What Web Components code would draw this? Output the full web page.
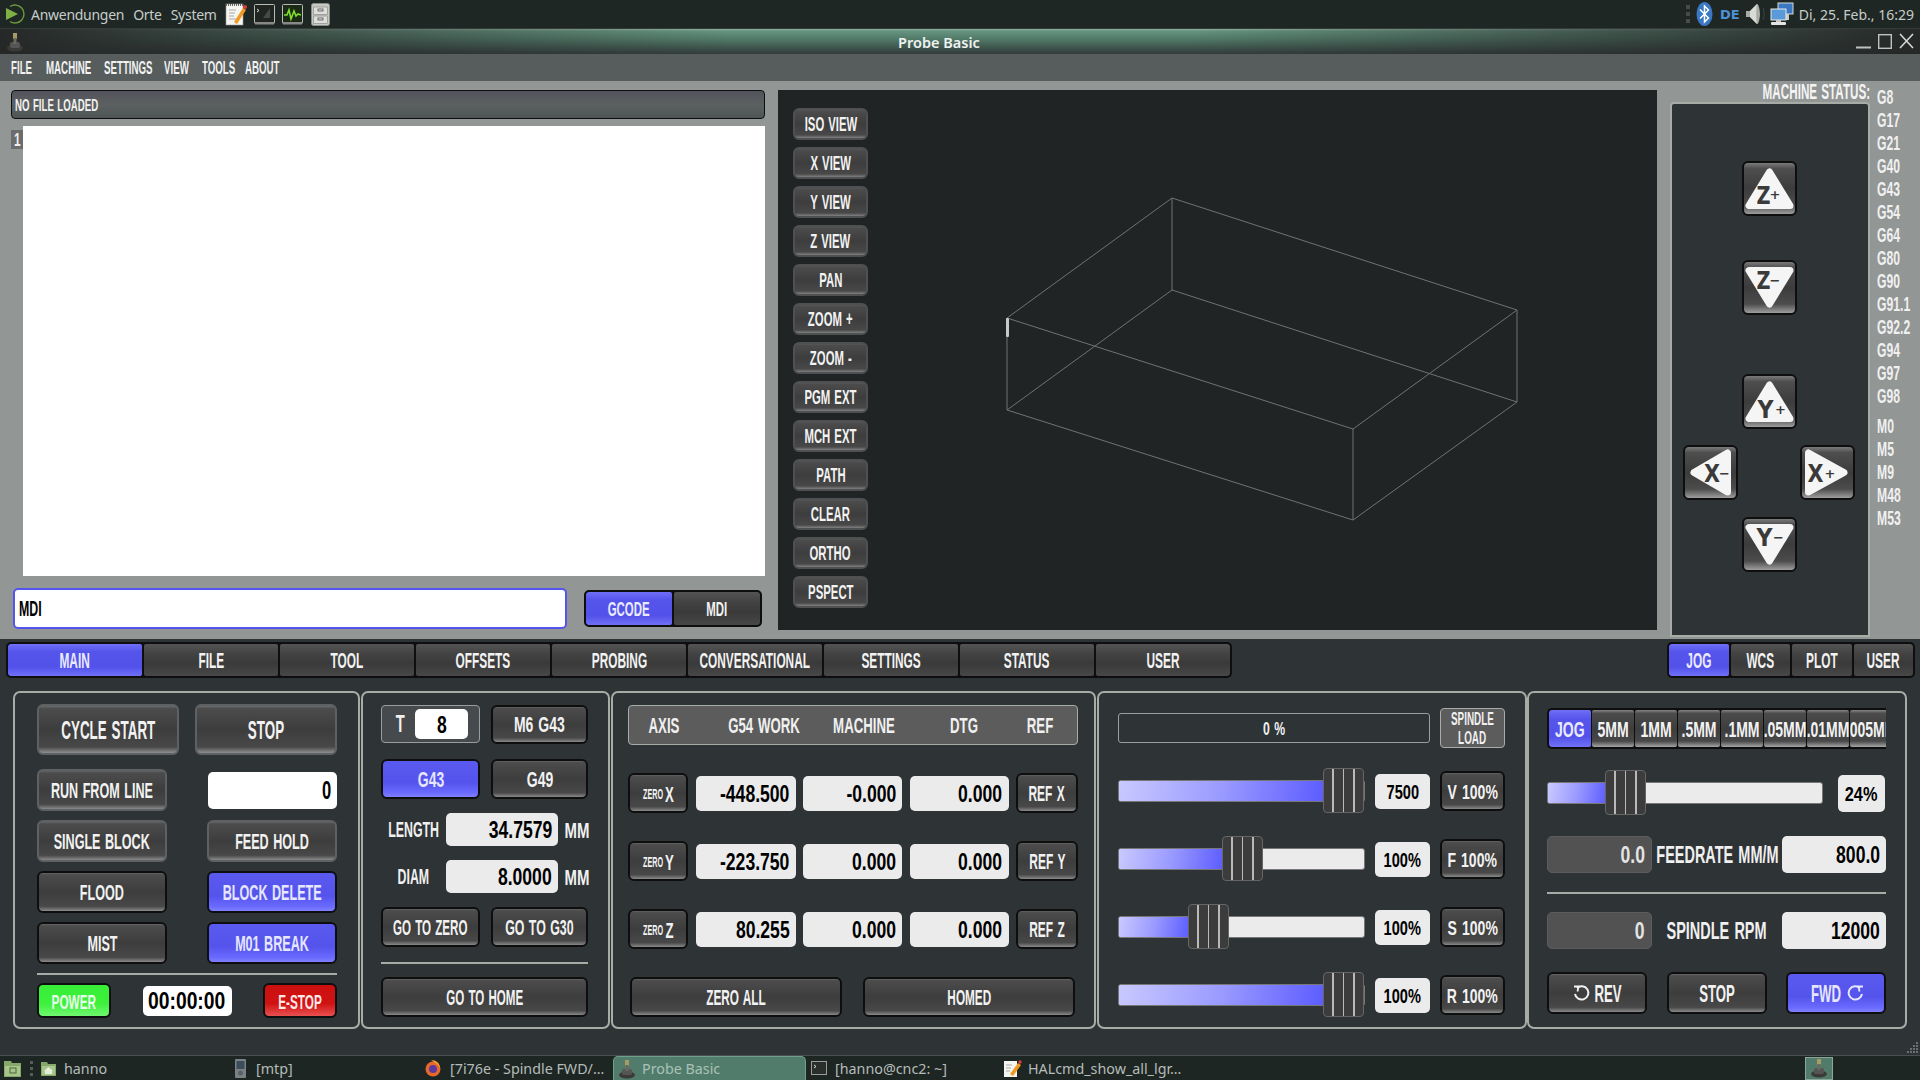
<!DOCTYPE html>
<html lang="de">
<head>
<meta charset="utf-8">
<title>Probe Basic</title>
<style>
  html, body { margin: 0; width: 1920px; height: 1080px; overflow: hidden; background: #2e3336; }
  body { display: flex; flex-direction: column; font-family: "Liberation Sans", Arial, sans-serif; }
</style>
</head>
<body>
<desk-panel></desk-panel>
<title-bar></title-bar>
<menu-bar></menu-bar>
<work-area></work-area>
<lower-area></lower-area>
<task-panel></task-panel>

<script>
// narrow caps: the machine UI font is a tall condensed face, so squeeze a bold sans
const NARROW = `
  .n { display: inline-flex; justify-content: center; white-space: nowrap; width: var(--w, auto); position: relative; top: 1px;
       word-spacing: .08em; transform: scaleX(calc(var(--sx, .63) * .9)); transform-origin: var(--ox, center);
       font: bold calc(var(--fs, 20px) * 1.11)/1 "Liberation Sans", Arial, sans-serif; }
`;
const PANEL = `
  :host { display: block; box-sizing: border-box; height: 338px; flex: none;
          border: 2px solid #a8aca6; border-radius: 7px; }
`;
const GLOSS = 'linear-gradient(180deg,#858585 0,#4c4c4c 9%,#3d3d3d 50%,#484848 84%,#a6a6a6 100%)';
const GLOSS_ON = 'linear-gradient(180deg,#5a5af0 0,#5454ec 60%,#6a6aff 88%,#8080ff 100%)';

class ShadowEl extends HTMLElement {
    constructor() {
        super();
        this.attachShadow({ mode: 'open' });
    }
    connectedCallback() {
        this.render();
    }
}

class CncBtn extends ShadowEl {
    render() {
        this.shadowRoot.innerHTML = `
            <style>
                ${NARROW}
                :host { display: flex; box-sizing: border-box; align-items: center; justify-content: center; gap: 4px;
                        border: 2px solid #0e0e0e; border-radius: 6px; color: #f2f2f2; overflow: hidden;
                        background: ${GLOSS}; background-origin: border-box; }
                :host([soft]) { border-color: #5d6163; }
                :host([on]) { background: ${GLOSS_ON}; color: #e6e6ff; }
            </style>
            <slot name="lead"></slot><span class="n"><slot></slot></span><slot name="trail"></slot>
        `;
    }
}

class ZeroBtn extends ShadowEl {
    render() {
        this.shadowRoot.innerHTML = `
            <style>
                ${NARROW}
                :host { display: block; }
                cnc-btn { height: 100%; --sx: 1.11; --fs: 18px; }
                .row { display: flex; align-items: center; gap: 2px; }
                .small { --fs: 12.5px; --sx: .58; --w: 20px; }
                .big { --fs: 20px; --sx: .66; --w: 9px; }
            </style>
            <cnc-btn><span class="row"><span class="n small">ZERO</span><span class="n big">${this.getAttribute('axis')}</span></span></cnc-btn>
        `;
    }
}

class CncField extends ShadowEl {
    render() {
        this.shadowRoot.innerHTML = `
            <style>
                ${NARROW}
                :host { display: flex; box-sizing: border-box; align-items: center; justify-content: flex-end;
                        padding-right: 6px; background: #ebebeb; color: #000; border-radius: 5px;
                        --fs: 22px; --sx: .8; --ox: right; }
                :host([center]) { justify-content: center; padding: 0; --ox: center; --fs: 18.5px; --sx: .79; }
                :host([white]) { background: #fff; }
                :host([dark]) { background: #525252; color: #e4e4e4; border: 1px solid #5d5d5d; }
            </style>
            <span class="n"><slot></slot></span>
        `;
    }
}

class CncLabel extends ShadowEl {
    render() {
        this.shadowRoot.innerHTML = `
            <style>
                ${NARROW}
                :host { display: flex; align-items: center; justify-content: center; color: #f0f0f0; }
                :host([left]) { justify-content: flex-start; --ox: left; }
                :host([right]) { justify-content: flex-end; --ox: right; }
            </style>
            <span class="n"><slot></slot></span>
        `;
    }
}

class CncTabs extends ShadowEl {
    render() {
        const items = this.getAttribute('items').split(',');
        const active = Number(this.getAttribute('active') || 0);
        const tabs = items.map((t, i) => `<div class="tab${i === active ? ' on' : ''}"><span class="n">${t}</span></div>`).join('');
        this.shadowRoot.innerHTML = `
            <style>
                ${NARROW}
                :host { display: flex; box-sizing: border-box; gap: var(--tg, 2px); background: #0e0e0e; border: 2px solid #0e0e0e;
                        border-radius: 5px; overflow: hidden; color: #f2f2f2; --fs: 19.5px; --sx: .61; }
                .tab { flex: none; width: var(--tw, 134px); display: flex; align-items: center; justify-content: center;
                       border-radius: 2px; overflow: hidden;
                       background: var(--tab-bg, linear-gradient(180deg,#545454 0,#434343 30%,#3a3a3a 60%,#474747 100%)); }
                .tab.on { background: linear-gradient(180deg,#6f6ff6 0,#5555ec 24%,#5252ea 72%,#7070f8 100%); color: #eaeaff; }
            </style>
            ${tabs}
        `;
    }
}

class CncSlider extends ShadowEl {
    render() {
        const pos = this.getAttribute('pos');
        this.shadowRoot.innerHTML = `
            <style>
                :host { display: block; position: relative; height: 22px; box-sizing: border-box; }
                .track { position: absolute; inset: 0; background: #ebebeb; border: 1px solid #777; border-radius: 3px; overflow: hidden; }
                .fill { height: 100%; width: ${pos}px; background: linear-gradient(100deg,#c9c9ff 0,#9a9aff 50%,#5c5cff 100%); }
                .handle { position: absolute; top: -12px; left: ${pos}px; width: 41px; height: 45px; box-sizing: border-box;
                          border: 1px solid #666; border-radius: 4px;
                          background: repeating-linear-gradient(90deg,#3c3c3c 0 8.4px,#b9b9b9 8.4px 10.2px); }
            </style>
            <div class="track"><div class="fill"></div></div>
            <div class="handle"></div>
        `;
    }
}

class JogBtn extends ShadowEl {
    render() {
        const axis = this.getAttribute('axis');
        const key = axis + this.getAttribute('sign');
        const spec = {
            'Z+': { tri: '27.5,11 7,44.5 48,44.5', lx: 21.5, ly: 43, sx: 33, sy: 38 },
            'Z-': { tri: '7,10.5 48,10.5 27.5,44', lx: 21.5, ly: 29, sx: 33, sy: 25 },
            'Y+': { tri: '27.5,11 7,44.5 48,44.5', lx: 23.5, ly: 44, sx: 38.5, sy: 40 },
            'Y-': { tri: '7,10.5 48,10.5 27.5,44', lx: 22.5, ly: 29, sx: 36.5, sy: 25 },
            'X-': { tri: '11,27.5 44.5,8 44.5,47', lx: 29, ly: 36.5, sx: 41.5, sy: 33 },
            'X+': { tri: '8.5,8 8.5,47 44,27.5',   lx: 15.5, ly: 36.5, sx: 30, sy: 33 }
        }[key];
        const sign = this.getAttribute('sign') === '+' ? '+' : '−';
        const wide = axis === 'Z' ? 14 : 16;
        this.shadowRoot.innerHTML = `
            <style>
                :host { display: block; width: 55px; height: 55px; box-sizing: border-box; border: 2px solid #0e0e0e;
                        border-radius: 6px; background: linear-gradient(180deg,#8a8a8a 0,#4e4e4e 14%,#3c3c3c 50%,#4c4c4c 80%,#b0b0b0 100%); background-origin: border-box; }
                svg { display: block; }
                text { font-family: "DejaVu Sans", sans-serif; font-weight: bold; fill: #3a3a3a; text-anchor: middle; }
            </style>
            <svg width="51" height="51" viewBox="2 2 51 51">
                <polygon points="${spec.tri}" fill="#f5f5f5" stroke="#f5f5f5" stroke-width="7" stroke-linejoin="round"/>
                <text x="${spec.lx}" y="${spec.ly}" font-size="24" textLength="${wide}" lengthAdjust="spacingAndGlyphs">${axis}</text>
                <text x="${spec.sx}" y="${spec.sy}" font-size="13">${sign}</text>
            </svg>
        `;
    }
}

class JoyIcon extends ShadowEl {
    render() {
        this.shadowRoot.innerHTML = `
            <style>:host { display: inline-block; width: 18px; height: 20px; flex: none; } svg { display: block; }</style>
            <svg width="18" height="20" viewBox="0 0 18 20">
                <ellipse cx="9" cy="16" rx="8" ry="3.5" fill="#3c3a36"/>
                <rect x="4" y="10" width="10" height="6" rx="2" fill="#555"/>
                <rect x="7" y="1" width="4" height="6" fill="#a89a64"/>
                <rect x="7.5" y="6" width="3" height="6" fill="#6a6a5c"/>
            </svg>
        `;
    }
}

class DeskPanel extends ShadowEl {
    render() {
        this.shadowRoot.innerHTML = `
            <style>
                :host { display: flex; align-items: center; flex: none; box-sizing: border-box; height: 29px; background: #1f2725;
                        border-bottom: 1px solid #343c3a; padding-left: 5px; color: #c6cdc9; font: 14px "Noto Sans", sans-serif; }
                svg { display: block; flex: none; }
                .menu { margin-left: 6px; display: flex; gap: 9px; letter-spacing: -.28px; }
                .tray { margin-left: auto; display: flex; align-items: center; padding-right: 6px; }
                .de { color: #4b93d6; font: bold 13px "DejaVu Sans", sans-serif; margin: 0 5px 0 7px; }
            </style>
            <svg width="20" height="22" viewBox="0 0 20 22">
                <path d="M5 3.5 A9 9 0 1 1 5 18.5" fill="none" stroke="#6f9a3c" stroke-width="1.4"/>
                <path d="M1 5 L13 11 L1 17 Z" fill="#7fb046"/>
            </svg>
            <div class="menu"><span>Anwendungen</span><span>Orte</span><span>System</span></div>
            <svg style="margin-left:8px" width="22" height="25" viewBox="0 0 22 25">
                <rect x="1" y="2" width="17" height="21" fill="#f4f4f0" stroke="#999" stroke-width=".6"/>
                <path d="M1 3h17" stroke="#666" stroke-width="2" stroke-dasharray="1 1"/>
                <path d="M4 8h7M4 11h6M4 14h5M4 17h7" stroke="#aaa"/>
                <path d="M9 20 L18 6 L21 8 L12 22 Z" fill="#f09a22"/>
                <circle cx="20" cy="5" r="2" fill="#d8403c"/>
            </svg>
            <svg style="margin-left:7px" width="21" height="21" viewBox="0 0 21 21">
                <rect x=".5" y=".5" width="20" height="19" rx="1" fill="#202522" stroke="#b8bcb6"/>
                <rect x="1" y="18" width="19" height="2.5" fill="#888"/>
                <path d="M3 5l2 1.5L3 8" stroke="#ddd" fill="none"/>
                <path d="M9 14 L16 4 V14 Z" fill="#454a46"/>
            </svg>
            <svg style="margin-left:7px" width="21" height="21" viewBox="0 0 21 21">
                <rect x=".5" y=".5" width="20" height="19" rx="1" fill="#1a2a14" stroke="#b8bcb6"/>
                <rect x="1" y="18" width="19" height="2.5" fill="#888"/>
                <path d="M2 11h3l2-5 2 9 3-8 2 5 2-2 3 1" fill="none" stroke="#7fe02c" stroke-width="1.6"/>
            </svg>
            <svg style="margin-left:8px" width="19" height="23" viewBox="0 0 19 23">
                <rect x=".5" y=".5" width="18" height="22" rx="2" fill="#c6c8c2" stroke="#8a8c88"/>
                <rect x="2.5" y="4" width="14" height="7.5" fill="#dcdeda" stroke="#8a8c88" stroke-width=".7"/>
                <rect x="2.5" y="13" width="14" height="7.5" fill="#dcdeda" stroke="#8a8c88" stroke-width=".7"/>
                <rect x="7" y="6" width="5" height="2" fill="none" stroke="#555" stroke-width=".8"/>
                <rect x="7" y="15" width="5" height="2" fill="none" stroke="#555" stroke-width=".8"/>
            </svg>
            <div class="tray">
                <svg width="5" height="18" viewBox="0 0 5 18"><path d="M0 0h4v4H0zM0 7h4v4H0zM0 14h4v4H0z" fill="#454c4a"/></svg>
                <svg style="margin-left:5px" width="17" height="24" viewBox="0 0 17 24">
                    <ellipse cx="8.5" cy="12" rx="8" ry="12" fill="#3a78c4"/>
                    <path d="M4 7.5 L12.5 16 L8.5 20 V4 L12.5 8 L4 16.5" fill="none" stroke="#fff" stroke-width="1.5"/>
                </svg>
                <span class="de">DE</span>
                <svg width="21" height="24" viewBox="0 0 21 24">
                    <path d="M1 9h4l7-7c1.5-1 3 6 3 10s-1.5 11-3 10l-7-7H1z" fill="#a8aca6"/>
                    <path d="M5 9l7-7c-1 4-1 16 0 20l-7-7z" fill="#d8dad6"/>
                    <path d="M18 6c1.5 4 1.5 8 0 12" stroke="#3a4442" fill="none"/>
                </svg>
                <svg style="margin-left:4px" width="24" height="24" viewBox="0 0 24 24">
                    <rect x="8" y="1" width="15" height="11" fill="#3a78c4" stroke="#d8dad6"/>
                    <rect x="15" y="12" width="4" height="6" fill="#c8cac6"/>
                    <rect x="1" y="7" width="15" height="11" fill="#5a9ad8" stroke="#e8e8e8"/>
                    <rect x="6" y="18" width="5" height="2" fill="#c8cac6"/>
                    <rect x="1" y="20" width="15" height="3" rx="1" fill="#e4e4e4"/>
                </svg>
                <span style="margin-left:5px">Di, 25. Feb., 16:29</span>
            </div>
        `;
    }
}

class TitleBar extends ShadowEl {
    render() {
        this.shadowRoot.innerHTML = `
            <style>
                :host { display: flex; align-items: center; justify-content: center; position: relative; flex: none; height: 25px; box-sizing: border-box; padding-right: 42px;
                        background: linear-gradient(90deg,#262828 0,rgba(38,40,40,0) 38%,rgba(38,40,40,0) 62%,#262828 100%),
                                    linear-gradient(180deg,#8fb5a4 0,#66937f 8%,#547f6d 35%,#3c4f49 80%,#333b3b 100%);
                        color: #eef2f0; font: 600 14.5px "Noto Sans", sans-serif; }
                joy-icon { position: absolute; left: 6px; top: 3px; }
                .ctl { position: absolute; right: 6px; top: 4px; display: flex; align-items: flex-end; gap: 7px; }
                svg { display: block; }
            </style>
            <joy-icon></joy-icon>
            <span>Probe Basic</span>
            <div class="ctl">
                <svg width="15" height="16" viewBox="0 0 15 16"><rect y="13.5" width="15" height="2" fill="#bdc2bf"/></svg>
                <svg width="14" height="16" viewBox="0 0 14 16"><rect x=".7" y="1.7" width="12.6" height="13.6" fill="none" stroke="#bdc2bf" stroke-width="1.4"/></svg>
                <svg width="15" height="16" viewBox="0 0 15 16"><path d="M1 1L14 15M14 1L1 15" stroke="#d4d8d5" stroke-width="1.6"/></svg>
            </div>
        `;
    }
}

class MenuBar extends ShadowEl {
    render() {
        const items = ['FILE', 'MACHINE', 'SETTINGS', 'VIEW', 'TOOLS', 'ABOUT'];
        this.shadowRoot.innerHTML = `
            <style>
                ${NARROW}
                :host { display: grid; flex: none; height: 27px; box-sizing: border-box; padding-left: 11px; align-items: center;
                        grid-template-columns: 34.5px 58.5px 60px 38px 43px auto; justify-content: start;
                        background: #575d5d; color: #f2f2f2; --fs: 16.5px; --sx: .59; --ox: left; }
                .n { justify-self: start; }
            </style>
            ${items.map(t => `<span class="n">${t}</span>`).join('')}
        `;
    }
}

class GcodePane extends ShadowEl {
    render() {
        this.shadowRoot.innerHTML = `
            <style>
                ${NARROW}
                :host { display: flex; flex-direction: column; flex: none; width: 754px; box-sizing: border-box; padding-top: 9px; margin-left: 11px; }
                .file { height: 29px; box-sizing: border-box; border: 1px solid #0e0e0e; border-radius: 4px; display: flex; align-items: center;
                        padding-left: 3px; color: #f2f2f2; --fs: 15.5px; --sx: .625; --ox: left;
                        background: linear-gradient(180deg,#53535c 0,#5c6060 50%,#4f5555 100%); }
                .editor { display: flex; height: 450px; margin-top: 7px; }
                .gutter { width: 12px; flex: none; }
                .gutter b { display: flex; align-items: center; justify-content: center; height: 19px; margin-top: 4px; background: #6c6c6c;
                            color: #eee; --fs: 17px; --sx: .7; }
                .text { flex: 1; background: #fff; }
                .cmd { display: flex; align-items: center; margin-top: 12px; height: 41px; }
                .mdi { width: 554px; height: 41px; box-sizing: border-box; margin-left: 2px; border: 2px solid #5555ee; border-radius: 5px; background: #fff;
                       display: flex; align-items: center; padding-left: 4px; color: #000; --fs: 20px; --sx: .62; --ox: left; }
                cnc-tabs { margin-left: 17px; height: 37px; --tw: 86px; --fs: 18.5px; --sx: .62; }
            </style>
            <div class="file"><span class="n">NO FILE LOADED</span></div>
            <div class="editor">
                <div class="gutter"><b><span class="n">1</span></b></div>
                <div class="text"></div>
            </div>
            <div class="cmd">
                <div class="mdi"><span class="n">MDI</span></div>
                <cnc-tabs items="GCODE,MDI" active="0"></cnc-tabs>
            </div>
        `;
    }
}

class ViewPane extends ShadowEl {
    render() {
        const names = ['ISO VIEW', 'X VIEW', 'Y VIEW', 'Z VIEW', 'PAN', 'ZOOM +', 'ZOOM -', 'PGM EXT', 'MCH EXT', 'PATH', 'CLEAR', 'ORTHO', 'PSPECT'];
        this.shadowRoot.innerHTML = `
            <style>
                :host { display: block; position: relative; flex: none; width: 879px; height: 540px; margin: 9px 0 0 13px; background: #202425; }
                .btns { display: flex; flex-direction: column; gap: 7px; padding: 18px 0 0 15px; width: 75px; position: relative; }
                cnc-btn { height: 32px; border-color: #4e5052; --fs: 17.5px; --sx: .65; }
                svg { position: absolute; left: 0; top: 0; }
                .cone { position: absolute; left: 228px; top: 228px; width: 3px; height: 19px; background: #c8c8c8; border-radius: 1px; }
            </style>
            <svg width="879" height="540" viewBox="778 90 879 540" fill="none" stroke="#6f7373" stroke-width="1">
                <path d="M1007 318 L1172 198 L1517 310 L1353 429 Z"/>
                <path d="M1007 410 L1172 290 L1517 402 L1353 520 Z"/>
                <path d="M1007 318 V410 M1172 198 V290 M1517 310 V402 M1353 429 V520"/>
            </svg>
            <div class="cone"></div>
            <div class="btns">${names.map(n => `<cnc-btn>${n}</cnc-btn>`).join('')}</div>
        `;
    }
}

class JogPane extends ShadowEl {
    render() {
        this.shadowRoot.innerHTML = `
            <style>
                ${NARROW}
                :host { display: flex; flex-direction: column; flex: none; width: 200px; margin-left: 13px; }
                .title { height: 21px; box-sizing: border-box; padding-bottom: 2px; display: flex; justify-content: flex-end; align-items: center; color: #f4f4f4; --fs: 19.5px; --sx: .6; --ox: right; }
                .pad { box-sizing: border-box; height: 535px; border: 2px solid #a8aca6; border-radius: 4px 4px 0 0; background: #2e3336;
                       display: grid; grid-template-columns: 55px 55px 55px; justify-content: center; column-gap: 4px; padding: 57px 2px 0 1px; align-content: start; }
                jog-btn { grid-column: 2; }
                .z2 { margin-top: 44px; }
                .y1 { margin-top: 59px; }
                .x1 { grid-column: 1; margin-top: 16px; }
                .x2 { grid-column: 3; margin: 16px 0 0 -1px; }
                .y2 { margin-top: 17px; }
            </style>
            <div class="title"><span class="n">MACHINE STATUS:</span></div>
            <div class="pad">
                <jog-btn axis="Z" sign="+"></jog-btn>
                <jog-btn axis="Z" sign="-" class="z2"></jog-btn>
                <jog-btn axis="Y" sign="+" class="y1"></jog-btn>
                <jog-btn axis="X" sign="-" class="x1"></jog-btn>
                <jog-btn axis="X" sign="+" class="x2"></jog-btn>
                <jog-btn axis="Y" sign="-" class="y2"></jog-btn>
            </div>
        `;
    }
}

class StatusList extends ShadowEl {
    render() {
        const g = ['G8', 'G17', 'G21', 'G40', 'G43', 'G54', 'G64', 'G80', 'G90', 'G91.1', 'G92.2', 'G94', 'G97', 'G98'];
        const m = ['M0', 'M5', 'M9', 'M48', 'M53'];
        const row = t => `<div><span class="n">${t}</span></div>`;
        this.shadowRoot.innerHTML = `
            <style>
                ${NARROW}
                :host { display: block; flex: none; margin-left: 7px; padding-top: 4px; color: #f0f0f0; --fs: 18.5px; --sx: .66; --ox: left; }
                div { height: 23px; display: flex; align-items: center; }
                .gap { height: 7px; }
            </style>
            ${g.map(row).join('')}<div class="gap"></div>${m.map(row).join('')}
        `;
    }
}

class WorkArea extends ShadowEl {
    render() {
        this.shadowRoot.innerHTML = `
            <style>
                :host { display: flex; flex: none; height: 558px; background: #929695; align-items: flex-start; }
            </style>
            <gcode-pane></gcode-pane>
            <view-pane></view-pane>
            <jog-pane></jog-pane>
            <status-list></status-list>
        `;
    }
}

class RunPanel extends ShadowEl {
    render() {
        this.shadowRoot.innerHTML = `
            <style>
                ${PANEL}
                ${NARROW}
                :host { width: 347px; padding: 11px 21px 0 22px; }
                .row { display: flex; justify-content: space-between; align-items: center; height: 42px; margin-top: 9px; }
                .row cnc-btn { width: 130px; height: 42px; }
                .row.top { height: 51px; margin: 0; }
                .row.top cnc-btn { width: 142px; height: 51px; --fs: 24px; --sx: .56; }
                .second { margin-top: 14px; }
                cnc-field { width: 129px; height: 37px; --fs: 23px; --sx: .72; }
                hr { margin: 9px 0 0; border: 0; height: 2px; background: #a8aca6; }
                .row.foot { height: 35px; margin-top: 8px; }
                .row.foot cnc-btn { height: 35px; width: 74px; --fs: 19px; --sx: .62; }
                .power { background: linear-gradient(180deg,#38ee38 0,#3cf03c 60%,#70f870 100%) !important; color: #eaffea; }
                .estop { background: linear-gradient(180deg,#cc1010 0,#d01212 60%,#e85050 100%) !important; color: #ffe8e8; }
                .timer { width: 89px; height: 30px; padding: 0; justify-content: center; --ox: center; --fs: 21px; --sx: .92; }
            </style>
            <div class="row top"><cnc-btn soft>CYCLE START</cnc-btn><cnc-btn soft>STOP</cnc-btn></div>
            <div class="row second"><cnc-btn soft>RUN FROM LINE</cnc-btn><cnc-field white>0</cnc-field></div>
            <div class="row"><cnc-btn soft>SINGLE BLOCK</cnc-btn><cnc-btn soft>FEED HOLD</cnc-btn></div>
            <div class="row"><cnc-btn>FLOOD</cnc-btn><cnc-btn on>BLOCK DELETE</cnc-btn></div>
            <div class="row"><cnc-btn>MIST</cnc-btn><cnc-btn on>M01 BREAK</cnc-btn></div>
            <hr>
            <div class="row foot"><cnc-btn class="power">POWER</cnc-btn><cnc-field white class="timer">00:00:00</cnc-field><cnc-btn class="estop">E-STOP</cnc-btn></div>
        `;
    }
}

class ToolPanel extends ShadowEl {
    render() {
        this.shadowRoot.innerHTML = `
            <style>
                ${PANEL}
                ${NARROW}
                :host { width: 249px; margin-left: 1px; padding: 12px 20px 0 18px; }
                .pair { display: grid; grid-template-columns: 99px 97px; column-gap: 11px; height: 40px; }
                .pair cnc-btn { --sx: .7; }
                .pair.first { height: 39px; }
                .mt15 { margin-top: 15px; }
                .t { box-sizing: border-box; height: 38px; border: 1px solid #9a9e9c; border-radius: 4px; background: #474a4c;
                     display: flex; align-items: center; padding-left: 3px; }
                .t cnc-label { width: 30px; --fs: 21px; --sx: .7; }
                .t cnc-field { width: 53px; height: 30px; padding: 0; justify-content: center; --ox: center; --fs: 22px; --sx: .8; }
                .meas { display: grid; grid-template-columns: 65px 112px 30px; height: 33px; margin-top: 14px; }
                .meas cnc-label { --fs: 20px; --sx: .62; }
                .meas .unit { --sx: .73; --fs: 20.5px; transform: translateX(4px); }
                .pair.go cnc-btn { --sx: .58; }
                .pair.go cnc-btn + cnc-btn { --sx: .62; }
                .mt14 { margin-top: 14px; }
                hr { margin: 15px 0 0; border: 0; height: 2px; background: #a8aca6; }
                .home { height: 40px; margin-top: 13px; --sx: .58; }
            </style>
            <div class="pair first">
                <div class="t"><cnc-label>T</cnc-label><cnc-field white>8</cnc-field></div>
                <cnc-btn>M6 G43</cnc-btn>
            </div>
            <div class="pair mt15"><cnc-btn on>G43</cnc-btn><cnc-btn>G49</cnc-btn></div>
            <div class="meas"><cnc-label>LENGTH</cnc-label><cnc-field>34.7579</cnc-field><cnc-label class="unit">MM</cnc-label></div>
            <div class="meas"><cnc-label>DIAM</cnc-label><cnc-field>8.0000</cnc-field><cnc-label class="unit">MM</cnc-label></div>
            <div class="pair go mt14"><cnc-btn>GO TO ZERO</cnc-btn><cnc-btn>GO TO G30</cnc-btn></div>
            <hr>
            <cnc-btn class="home">GO TO HOME</cnc-btn>
        `;
    }
}

class DroPanel extends ShadowEl {
    render() {
        const row = (a, w, m, d) => `
            <div class="row">
                <zero-btn axis="${a}"></zero-btn>
                <cnc-field>${w}</cnc-field><cnc-field>${m}</cnc-field><cnc-field>${d}</cnc-field>
                <cnc-btn>REF ${a}</cnc-btn>
            </div>`;
        this.shadowRoot.innerHTML = `
            <style>
                ${PANEL}
                ${NARROW}
                :host { width: 485px; margin-left: 1px; padding: 12px 16px 0 15px; display: flex; flex-direction: column; gap: 28px; }
                .head { box-sizing: border-box; height: 40px; display: flex; align-items: center; background: #5c5c5c; border: 1px solid #a8aca6; border-radius: 4px;
                        color: #f0f0f0; --fs: 19.5px; --sx: .68; }
                .head span { width: 70px; }
                .head span + span { margin-left: 30px; }
                .head span:last-child { margin-left: 6px; }
                .row { display: grid; grid-template-columns: 60px 100px 99px 99px 62px; column-gap: 7.5px; height: 40px; align-items: center; }
                .row > * { height: 40px; }
                .row cnc-field { height: 35px; }
                .row cnc-btn { --fs: 20px; --sx: .6; }
                .foot { display: flex; justify-content: space-between; padding: 0 3px 0 2px; }
                .foot cnc-btn { width: 212px; height: 40px; --sx: .59; }
            </style>
            <div class="head"><span class="n">AXIS</span><span class="n">G54 WORK</span><span class="n">MACHINE</span><span class="n">DTG</span><span class="n">REF</span></div>
            ${row('X', '-448.500', '-0.000', '0.000')}
            ${row('Y', '-223.750', '0.000', '0.000')}
            ${row('Z', '80.255', '0.000', '0.000')}
            <div class="foot"><cnc-btn>ZERO ALL</cnc-btn><cnc-btn>HOMED</cnc-btn></div>
        `;
    }
}

class OverridePanel extends ShadowEl {
    render() {
        const row = (pos, val, btn) => `
            <cnc-slider pos="${pos}"></cnc-slider>
            <cnc-field center>${val}</cnc-field>
            <cnc-btn>${btn}</cnc-btn>`;
        this.shadowRoot.innerHTML = `
            <style>
                ${PANEL}
                ${NARROW}
                :host { width: 430px; margin-left: 1px; padding: 15px 0 0 19px; }
                .grid { display: grid; grid-template-columns: 247px 55px 65px; column-gap: 10px; grid-template-rows: 35px 40px 40px 40px 40px;
                        row-gap: 28px; align-items: center; }
                .load { grid-column: 1 / 3; align-self: start; height: 30px; margin-top: 5px; box-sizing: border-box; border: 1px solid #9a9e9c; border-radius: 3px; display: flex;
                        align-items: center; justify-content: center; color: #f0f0f0; --fs: 17px; --sx: .72; }
                .spin { align-self: start; height: 40px; box-sizing: border-box; background: #5c5c5c; border: 1px solid #a8aca6; border-radius: 4px; color: #f0f0f0;
                        display: flex; flex-direction: column; align-items: center; justify-content: center; --fs: 16px; --sx: .62; }
                .spin .n { height: 19px; align-items: center; }
                cnc-field { height: 35px; }
                cnc-btn { height: 40px; --fs: 18.5px; --sx: .76; }
            </style>
            <div class="grid">
                <div class="load"><span class="n">0 %</span></div>
                <div class="spin"><span class="n">SPINDLE</span><span class="n">LOAD</span></div>
                ${row(205, '7500', 'V 100%')}
                ${row(104, '100%', 'F 100%')}
                ${row(70, '100%', 'S 100%')}
                ${row(205, '100%', 'R 100%')}
            </div>
        `;
    }
}

class SpindlePanel extends ShadowEl {
    render() {
        this.shadowRoot.innerHTML = `
            <style>
                ${PANEL}
                ${NARROW}
                :host { width: 380px; padding: 15px 0 0 18px; }
                .inner { width: 339px; }
                cnc-tabs { height: 41px; border-radius: 5px 0 0 5px; border-right: 0; --tw: 42px; --tg: 1px; --fs: 19.5px; --sx: .72;
                           --tab-bg: ${GLOSS}; }
                .sl { display: flex; align-items: center; margin-top: 33px; height: 22px; }
                cnc-slider { width: 276px; flex: none; }
                .pct { width: 47px; height: 37px; margin-left: 15px; --fs: 19px; --sx: .86; }
                .line { display: grid; grid-template-columns: 105px minmax(0, 1fr) 104px; height: 37px; align-items: stretch; }
                .line cnc-label { --fs: 21px; --sx: .69; }
                .a { margin-top: 32px; }
                hr { margin: 19px 0 0; border: 0; height: 2px; background: #a8aca6; }
                .b { margin-top: 18px; }
                .btns { display: flex; justify-content: space-between; margin-top: 23px; }
                .btns cnc-btn { width: 100px; height: 42px; --fs: 22px; --sx: .6; --w: 28px; }
                svg { display: block; flex: none; }
                .btns cnc-btn.stop { --w: 40px; }
                .btns cnc-btn.fwd { --w: 34px; }
            </style>
            <div class="inner">
                <cnc-tabs items="JOG,5MM,1MM,.5MM,.1MM,.05MM,.01MM,.005MM" active="0"></cnc-tabs>
                <div class="sl"><cnc-slider pos="58"></cnc-slider><cnc-field center class="pct">24%</cnc-field></div>
                <div class="line a"><cnc-field dark>0.0</cnc-field><cnc-label>FEEDRATE MM/M</cnc-label><cnc-field>800.0</cnc-field></div>
                <hr>
                <div class="line b"><cnc-field dark>0</cnc-field><cnc-label>SPINDLE RPM</cnc-label><cnc-field>12000</cnc-field></div>
                <div class="btns">
                    <cnc-btn><svg slot="lead" width="17" height="17" viewBox="0 0 17 17" fill="none" stroke="#f2f2f2" stroke-width="2"><path d="M4 3 A6.7 6.7 0 1 1 2 9"/><path d="M1 1.5 L5.5 1.5 L4.5 6.5" stroke-width="1.8"/></svg>REV</cnc-btn>
                    <cnc-btn class="stop">STOP</cnc-btn>
                    <cnc-btn on class="fwd">FWD<svg slot="trail" width="17" height="17" viewBox="0 0 17 17" fill="none" stroke="#e6e6ff" stroke-width="2"><path d="M13 3 A6.7 6.7 0 1 0 15 9"/><path d="M16 1.5 L11.5 1.5 L12.5 6.5" stroke-width="1.8"/></svg></cnc-btn>
                </div>
            </div>
        `;
    }
}

class LowerArea extends ShadowEl {
    render() {
        this.shadowRoot.innerHTML = `
            <style>
                :host { display: block; position: relative; flex: none; height: 416px; background: #2e3336; }
                .tabs { display: flex; justify-content: space-between; padding: 3px 5px 0 6px; height: 36px; }
                .main { width: 1226px; }
                .side { width: 248px; --tw: 59.5px; }
                .panels { display: flex; margin-top: 13px; padding-left: 13px; }
                svg { position: absolute; right: 2px; bottom: 1px; }
            </style>
            <div class="tabs">
                <cnc-tabs class="main" items="MAIN,FILE,TOOL,OFFSETS,PROBING,CONVERSATIONAL,SETTINGS,STATUS,USER" active="0"></cnc-tabs>
                <cnc-tabs class="side" items="JOG,WCS,PLOT,USER" active="0"></cnc-tabs>
            </div>
            <div class="panels">
                <run-panel></run-panel>
                <tool-panel></tool-panel>
                <dro-panel></dro-panel>
                <override-panel></override-panel>
                <spindle-panel></spindle-panel>
            </div>
            <svg width="12" height="12" viewBox="0 0 12 12" fill="#6a7070">
                <path d="M10 0h2v2h-2zM7 3h2v2H7zM10 3h2v2h-2zM4 6h2v2H4zM7 6h2v2H7zM10 6h2v2h-2zM1 9h2v2H1zM4 9h2v2H4zM7 9h2v2H7zM10 9h2v2h-2z"/>
            </svg>
        `;
    }
}

class TaskPanel extends ShadowEl {
    render() {
        const folder = `<svg width="17" height="18" viewBox="0 0 17 18"><path d="M1 3h6l1 2h8v12H1z" fill="#86a86a"/><path d="M2 7h13v9H2z" fill="#a8c68c"/><path d="M8.5 8 L13 12H12v3H5v-3H4z" fill="#e4eed8"/></svg>`;
        const gedit = `<svg width="19" height="19" viewBox="0 0 19 19"><rect x="1" y="2" width="13" height="16" fill="#f4f4f0"/><path d="M3 6h6M3 9h5M3 12h4" stroke="#aaa"/><path d="M7 15 L15 4 L18 6 L10 17 Z" fill="#f09a22"/><circle cx="17" cy="3" r="1.7" fill="#d8403c"/></svg>`;
        const term = `<svg width="16" height="16" viewBox="0 0 16 16"><rect x=".5" y="1.5" width="15" height="13" fill="#2a2f2c" stroke="#9a9e9a"/><path d="M3 5l2 1.5L3 8" stroke="#ddd" fill="none"/></svg>`;
        this.shadowRoot.innerHTML = `
            <style>
                :host { display: block; flex: none; height: 25px; box-sizing: border-box; background: #1e2624; border-top: 1px solid #4a504e;
                        color: #b4bcb8; font: 14.3px "Noto Sans", sans-serif; }
                .bar { display: grid; height: 24px; align-items: center;
                       grid-template-columns: 30px 10px 24px 171px 21px 169px 25px 163px 198px 24px 168px 802px 28px 87px; }
                .bar > * { white-space: nowrap; overflow: hidden; }
                svg { display: block; }
                .c { display: flex; align-items: center; }
                .active { box-sizing: border-box; height: 24px; background: #517c6c; border: 1px solid #6fa08c; border-bottom: 0; border-radius: 5px 5px 0 0;
                          display: flex; align-items: center; gap: 6px; padding-left: 4px; color: #a9c2b6; margin-right: 5px; }
                .dots { width: 3px; height: 15px; background: repeating-linear-gradient(180deg,#555c5a 0 3px,transparent 3px 6px); }
                .app { box-sizing: border-box; height: 23px; background: #517c6c; border: 1px solid #8aa89a; display: flex; justify-content: center; align-items: center; }
                .pad { padding-left: 3px; }
                .gedit { gap: 6px; }
            </style>
            <div class="bar">
                <div class="c pad"><svg width="20" height="20" viewBox="0 0 20 20"><path d="M1 3h7l1 2h9v14H1z" fill="#86a86a"/><path d="M2 8h15v10H2z" fill="#a8c68c"/><rect x="7" y="10" width="6" height="5" fill="none" stroke="#4c6238"/></svg></div>
                <div class="c"><div class="dots"></div></div>
                <div class="c">${folder}</div>
                <span>hanno</span>
                <div class="c"><svg width="11" height="19" viewBox="0 0 11 19"><rect width="11" height="19" rx="1" fill="#7a8288"/><rect x="1.5" y="2" width="8" height="8" fill="#3c4c58"/><circle cx="5.5" cy="14" r="2.5" fill="#5a6268"/></svg></div>
                <span>[mtp]</span>
                <div class="c"><svg width="16" height="18" viewBox="0 0 16 18"><circle cx="8" cy="10" r="7.5" fill="#e8682c"/><circle cx="8" cy="10" r="4" fill="#5a3a9c"/><path d="M6 1c5 0 9 3 9 8-2-4-5-5-9-8z" fill="#f2a030"/></svg></div>
                <span>[7i76e - Spindle FWD/…</span>
                <div class="active"><joy-icon></joy-icon><span>Probe Basic</span></div>
                <div class="c">${term}</div>
                <span>[hanno@cnc2: ~]</span>
                <div class="c gedit">${gedit}<span>HALcmd_show_all_lgr…</span></div>
                <div class="app"><joy-icon></joy-icon></div>
                <div></div>
            </div>
        `;
    }
}

customElements.define('cnc-btn', CncBtn);
customElements.define('zero-btn', ZeroBtn);
customElements.define('cnc-field', CncField);
customElements.define('cnc-label', CncLabel);
customElements.define('cnc-tabs', CncTabs);
customElements.define('cnc-slider', CncSlider);
customElements.define('jog-btn', JogBtn);
customElements.define('joy-icon', JoyIcon);
customElements.define('desk-panel', DeskPanel);
customElements.define('title-bar', TitleBar);
customElements.define('menu-bar', MenuBar);
customElements.define('gcode-pane', GcodePane);
customElements.define('view-pane', ViewPane);
customElements.define('jog-pane', JogPane);
customElements.define('status-list', StatusList);
customElements.define('work-area', WorkArea);
customElements.define('run-panel', RunPanel);
customElements.define('tool-panel', ToolPanel);
customElements.define('dro-panel', DroPanel);
customElements.define('override-panel', OverridePanel);
customElements.define('spindle-panel', SpindlePanel);
customElements.define('lower-area', LowerArea);
customElements.define('task-panel', TaskPanel);
</script>
</body>
</html>
